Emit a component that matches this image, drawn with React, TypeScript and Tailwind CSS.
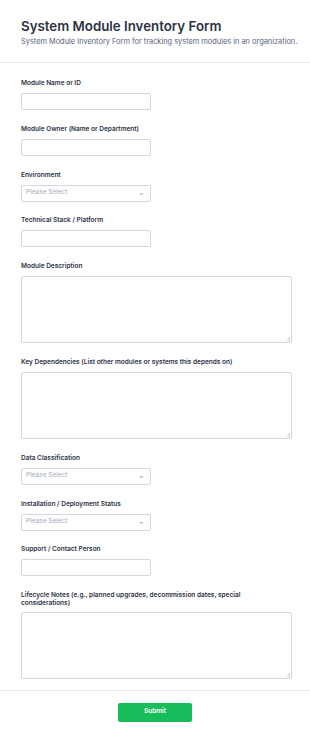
import React from "react";

const font = { fontFamily: "Inter, 'Noto Sans', sans-serif" };

function Label({ children, tight }: { children: React.ReactNode; tight?: boolean }) {
  return (
    <label
      className={
        tight
          ? "block max-w-[258px] text-[6.5px] leading-[8.3px] font-semibold text-[#2c3345] mb-[4px]"
          : "block max-w-[258px] text-[6.5px] leading-[8.5px] font-semibold text-[#2c3345] mb-[5.5px]"
      }
    >
      {children}
    </label>
  );
}

function TextInput() {
  return (
    <input
      type="text"
      className="block w-[130px] h-[17px] border border-[#d3d7e0] rounded-[2px] bg-white outline-none"
    />
  );
}

function Select() {
  return (
    <div className="relative w-[130px] h-[17px] border border-[#d3d7e0] rounded-[2px] bg-white flex items-center pl-[4px]">
      <span className="text-[6.5px] text-[#a3aabb]">Please Select</span>
      <svg
        className="absolute right-[6px] top-[6.5px]"
        width="5"
        height="4"
        viewBox="0 0 5 4"
        fill="none"
      >
        <path d="M1 1.1 L2.5 2.6 L4 1.1" stroke="#7a8196" strokeWidth="0.9" />
      </svg>
    </div>
  );
}

function TextArea() {
  return (
    <div className="relative w-[271px] h-[67px]">
      <textarea className="block w-full h-full resize-none border border-[#d3d7e0] rounded-[2px] bg-white outline-none" />
      <svg
        className="absolute right-[2px] bottom-[2px]"
        width="4"
        height="4"
        viewBox="0 0 4 4"
      >
        <rect x="3" y="0" width="1" height="1" fill="#c4c8d2" />
        <rect x="2" y="1" width="1" height="1" fill="#c4c8d2" />
        <rect x="3" y="2" width="1" height="1" fill="#c4c8d2" />
        <rect x="1" y="3" width="1" height="1" fill="#c4c8d2" />
        <rect x="3" y="3" width="1" height="1" fill="#c4c8d2" />
        <rect x="2" y="3" width="1" height="1" fill="#d6d9e0" />
      </svg>
    </div>
  );
}

function Field({
  label,
  children,
  tight,
}: {
  label: React.ReactNode;
  children: React.ReactNode;
  tight?: boolean;
}) {
  return (
    <div>
      <Label tight={tight}>{label}</Label>
      {children}
    </div>
  );
}

export default function App() {
  return (
    <div className="w-[310px] min-h-[739px] bg-white" style={font}>
      <div className="px-[21px] pt-[17px] pb-[16.5px] border-b border-[#e9eaef]">
        <h1 className="text-[13.3px] leading-[18px] font-semibold text-[#2c3345]">
          System Module Inventory Form
        </h1>
        <p className="mt-[1.5px] text-[7.4px] leading-[9px] text-[#57647e] whitespace-nowrap">
          System Module Inventory Form for tracking system modules in an organization.
        </p>
      </div>
      <div className="pl-[21px] pr-[18px] pt-[16px] pb-[11px] flex flex-col gap-[14.8px] border-b border-[#e9eaef]">
        <Field label="Module Name or ID">
          <TextInput />
        </Field>
        <Field label="Module Owner (Name or Department)">
          <TextInput />
        </Field>
        <Field label="Environment">
          <Select />
        </Field>
        <Field label="Technical Stack / Platform">
          <TextInput />
        </Field>
        <Field label="Module Description">
          <TextArea />
        </Field>
        <Field label="Key Dependencies (List other modules or systems this depends on)">
          <TextArea />
        </Field>
        <Field label="Data Classification">
          <Select />
        </Field>
        <Field label="Installation / Deployment Status">
          <Select />
        </Field>
        <Field label="Support / Contact Person">
          <TextInput />
        </Field>
        <Field
          tight
          label="Lifecycle Notes (e.g., planned upgrades, decommission dates, special considerations)"
        >
          <TextArea />
        </Field>
      </div>
      <div className="flex justify-center pt-[12px] pb-[17px]">
        <button className="w-[74px] h-[19px] rounded-[2px] bg-[#18bd5b] text-white text-[6.5px] font-semibold">
          Submit
        </button>
      </div>
    </div>
  );
}
